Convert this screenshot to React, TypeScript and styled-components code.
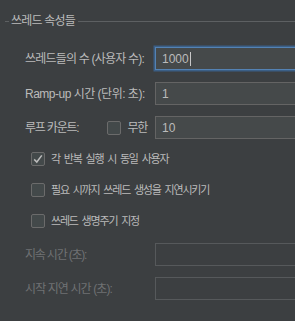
import React from "react";
import styled, { createGlobalStyle } from "styled-components";

const GlobalStyle = createGlobalStyle`
  html, body {
    margin: 0;
    padding: 0;
    background: #3c3f41;
    overflow: hidden;
  }
  body {
    font-family: "Liberation Sans", "Noto Sans CJK KR", sans-serif;
    font-size: 12px;
    letter-spacing: -0.5px;
    line-height: 16px;
    color: #bbbbbb;
  }
`;

const App: React.FC = () => {
  return (
    <Panel>
      <GlobalStyle />
      <TitleBar>
        <TitleLine $short />
        <TitleText>쓰레드 속성들</TitleText>
        <TitleLine />
      </TitleBar>

      <Form>
        <Row $top={17}>
          <Label $spacing={-0.8}>쓰레드들의 수 (사용자 수):</Label>
          <Field $focused>
            1000
            <Caret />
          </Field>
        </Row>

        <Row $top={12}>
          <Label>Ramp-up 시간 (단위: 초):</Label>
          <Field>1</Field>
        </Row>

        <Row $top={11}>
          <Label $spacing={-1.2}>
            루프 카운트:
            <InlineCheck>
              <CheckBox />
              무한
            </InlineCheck>
          </Label>
          <Field>10</Field>
        </Row>

        <CheckRow $top={12}>
          <CheckBox>
            <svg width="12" height="12" viewBox="0 0 12 12">
              <path d="M2.2 6.4 L4.8 9 L9.8 2.4" fill="none" stroke="#bcbcbc" strokeWidth="1.5" />
            </svg>
          </CheckBox>
          각 반복 실행 시 동일 사용자
        </CheckRow>
        <CheckRow $top={15}>
          <CheckBox />
          필요 시까지 쓰레드 생성을 지연시키기
        </CheckRow>
        <CheckRow $top={15}>
          <CheckBox />
          쓰레드 생명주기 지정
        </CheckRow>

        <Row $top={14}>
          <Label $disabled $spacing={-1.2}>지속 시간 (초):</Label>
          <Field $disabled />
        </Row>
        <Row $top={11}>
          <Label $disabled $spacing={-0.9}>시작 지연 시간 (초):</Label>
          <Field $disabled />
        </Row>
      </Form>
    </Panel>
  );
};

export default App;

const Panel = styled.div`
  width: 295px;
  height: 321px;
  padding-left: 5px;
  box-sizing: border-box;
`;

const TitleBar = styled.div`
  display: flex;
  align-items: center;
  height: 18px;
  padding-top: 12px;
  margin-right: -5px;
`;

const TitleLine = styled.div<{ $short?: boolean }>`
  height: 1px;
  background: #5d6062;
  flex: ${(p) => (p.$short ? "0 0 4px" : "1")};
`;

const TitleText = styled.span`
  padding: 0 3px 0 2px;
  letter-spacing: -0.8px;
  color: #bbbbbb;
`;

const Form = styled.div`
  padding-left: 20px;
`;

const Row = styled.div<{ $top: number }>`
  display: flex;
  align-items: center;
  height: 23px;
  margin-top: ${(p) => p.$top}px;
  margin-right: -10px;
`;

const Label = styled.div<{ $disabled?: boolean; $spacing?: number }>`
  flex: 0 0 130px;
  display: flex;
  align-items: center;
  white-space: nowrap;
  letter-spacing: ${(p) => p.$spacing ?? -0.5}px;
  color: ${(p) => (p.$disabled ? "#6f7173" : "#bbbbbb")};
`;

const InlineCheck = styled.span`
  display: inline-flex;
  align-items: center;
  gap: 6px;
  margin-left: 29px;
`;

const Field = styled.div<{ $focused?: boolean; $disabled?: boolean }>`
  flex: 1;
  height: 23px;
  box-sizing: border-box;
  display: flex;
  align-items: center;
  padding-left: 6px;
  letter-spacing: 0;
  color: #bbbbbb;
  background: ${(p) => (p.$disabled ? "#3c3f41" : "#45494a")};
  border: 1px solid
    ${(p) => (p.$focused ? "#5482b3" : p.$disabled ? "#56595b" : "#646464")};
  box-shadow: ${(p) => (p.$focused ? "0 0 0 1.5px #3b5f86" : "none")};
`;

const Caret = styled.span`
  display: inline-block;
  width: 1px;
  height: 14px;
  margin-left: 1px;
  background: #c8c8c8;
`;

const CheckRow = styled.div<{ $top: number }>`
  display: flex;
  align-items: center;
  gap: 6px;
  height: 16px;
  margin-top: ${(p) => p.$top}px;
  padding-left: 6px;
  white-space: nowrap;
  font-size: 11px;
  letter-spacing: -1.2px;
  word-spacing: 2px;
  color: #bbbbbb;
`;

const CheckBox = styled.span<{ $checked?: boolean }>`
  width: 14px;
  height: 14px;
  box-sizing: border-box;
  display: inline-flex;
  align-items: center;
  justify-content: center;
  border: 1px solid #6b6b6b;
  border-radius: 2px;
  background: #43494a;
  flex: 0 0 auto;
`;
